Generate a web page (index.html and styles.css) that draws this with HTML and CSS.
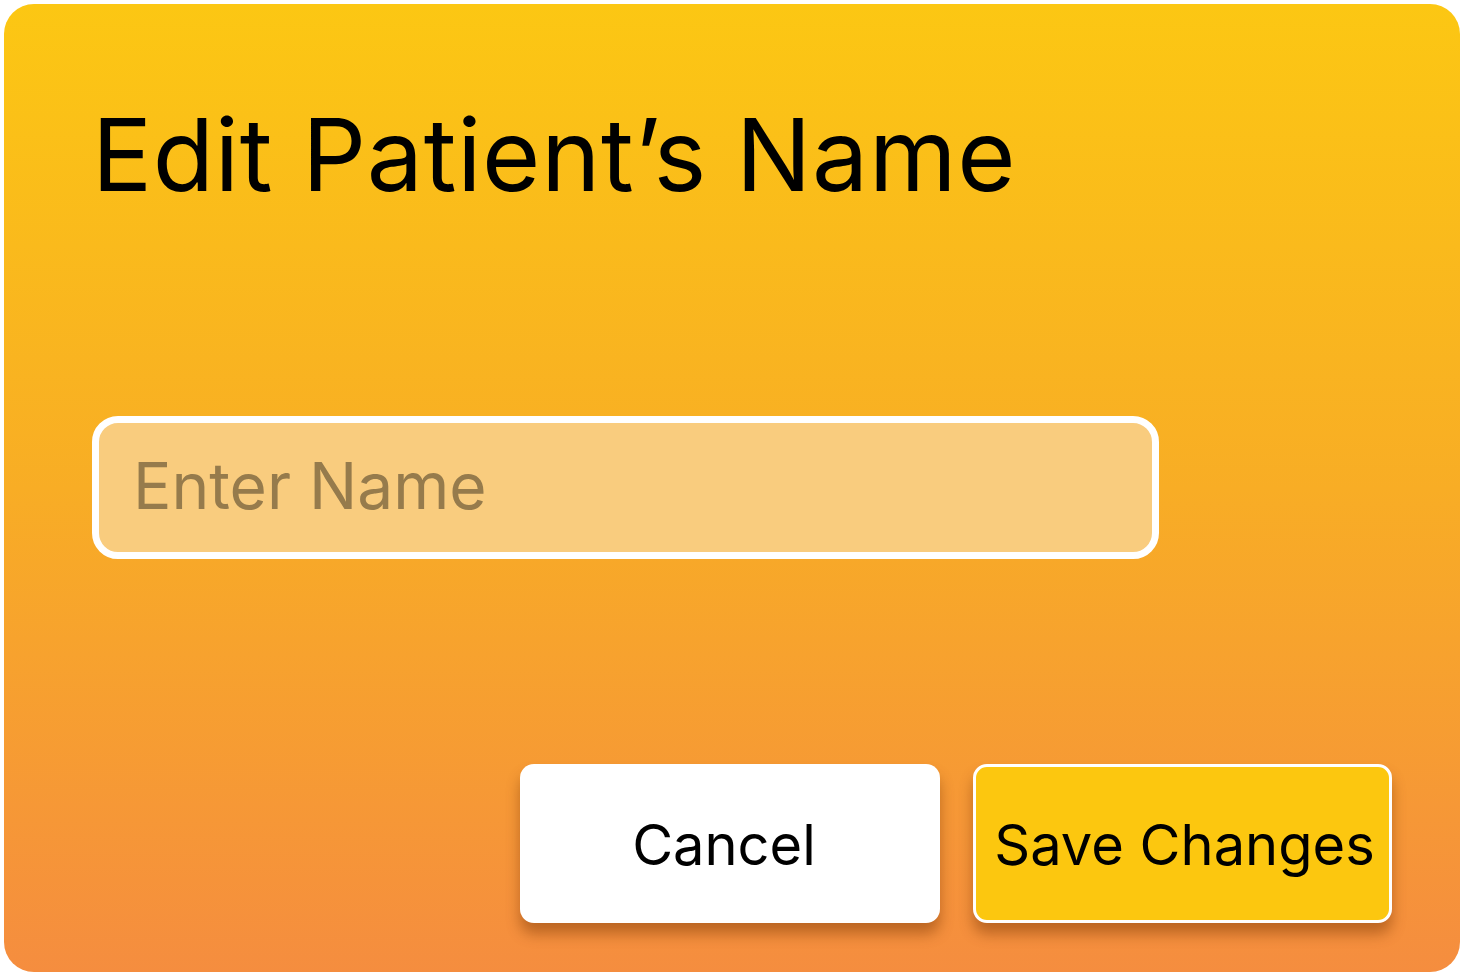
FILE: index.html
```html
<!DOCTYPE html>
<html lang="en">
<head>
<meta charset="utf-8">
<title>Edit Patient's Name</title>
<link rel="stylesheet" href="styles.css">
</head>
<body>
<div class="card">
  <h1 class="title">Edit Patient’s Name</h1>
  <div class="field">
    <input class="name-input" type="text" placeholder="Enter Name">
  </div>
  <div class="actions">
    <button class="btn btn-cancel" type="button">Cancel</button>
    <button class="btn btn-save" type="button">Save Changes</button>
  </div>
</div>
</body>
</html>
```
FILE: styles.css
```css
html, body {
  margin: 0;
  padding: 0;
  background: #ffffff;
}
body {
  font-family: Inter, "Noto Sans", sans-serif;
}
.card {
  box-sizing: border-box;
  margin: 4px;
  width: 1456px;
  height: 968px;
  border-radius: 30px;
  background: linear-gradient(180deg, #fcc713 0%, #f8ad25 50%, #f58d3f 100%);
  padding: 101px 68px 0 88px;
  display: flex;
  flex-direction: column;
}
.title {
  margin: 0;
  font-size: 100px;
  line-height: 100px;
  font-weight: 400;
  color: #000;
  letter-spacing: 0.75px;
}
.field {
  margin-top: 211px;
}
.name-input {
  box-sizing: border-box;
  width: 1067px;
  height: 143px;
  border: 7px solid #ffffff;
  border-radius: 26px;
  background: #f9cc7e;
  padding: 0 0 4px 34px;
  font-family: Inter, "Noto Sans", sans-serif;
  font-size: 64px;
  color: #000;
  outline: none;
  display: block;
}
.name-input::placeholder {
  color: #967b4c;
  opacity: 1;
}
.actions {
  margin-top: 205px;
  display: flex;
  justify-content: flex-end;
  gap: 33px;
}
.btn {
  box-sizing: border-box;
  height: 159px;
  border-radius: 14px;
  font-family: Inter, "Noto Sans", sans-serif;
  font-size: 56px;
  font-weight: 400;
  color: #000;
  box-shadow: 0 11px 14px rgba(110, 45, 0, 0.42);
  cursor: pointer;
  padding: 2px 0 0 0;
}
.btn-cancel {
  width: 420px;
  background: #ffffff;
  border: none;
  padding-right: 12px;
}
.btn-save {
  width: 419px;
  background: #fcc70f;
  border: 3px solid #ffffff;
  padding-left: 4px;
}
```
